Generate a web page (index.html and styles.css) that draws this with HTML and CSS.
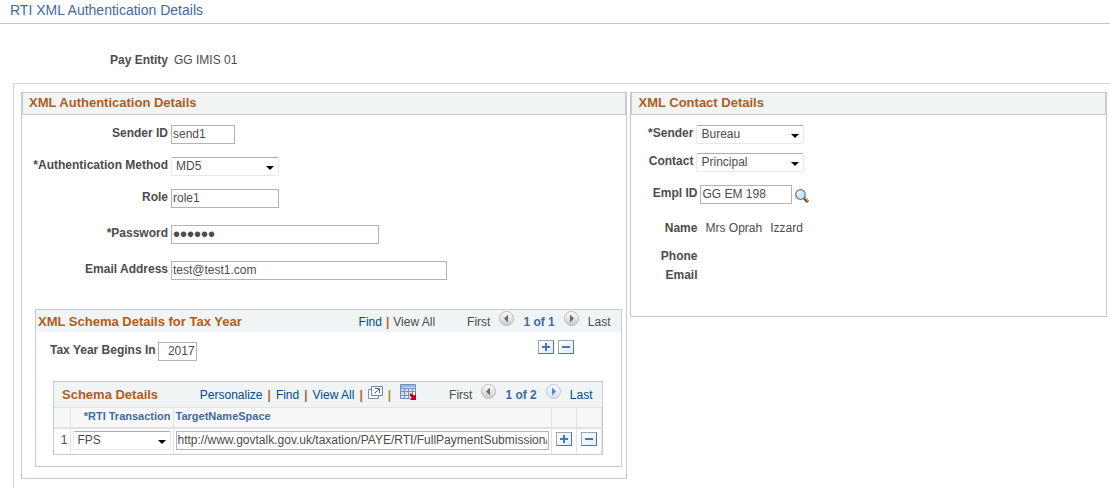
FILE: index.html
```
<!DOCTYPE html>
<html lang="en">
<head>
    <meta charset="UTF-8">
    <meta name="viewport" content="width=device-width, initial-scale=1.0">
    <title>RTI XML Authentication Details</title>
    <link rel="stylesheet" href="styles.css">
</head>
<body>
    <!-- Shared icons -->
    <svg class="sprite" aria-hidden="true">
        <defs>
            <linearGradient id="silver" x1="0" y1="0" x2="0" y2="1">
                <stop offset="0" stop-color="#ffffff"/>
                <stop offset="1" stop-color="#c9cacb"/>
            </linearGradient>
            <linearGradient id="blue" x1="0" y1="0" x2="0" y2="1">
                <stop offset="0" stop-color="#ffffff"/>
                <stop offset="1" stop-color="#d3e0f6"/>
            </linearGradient>
            <linearGradient id="sheet" x1="0" y1="0" x2="1" y2="1">
                <stop offset="0" stop-color="#a3c4ff"/>
                <stop offset="1" stop-color="#ffffff"/>
            </linearGradient>
        </defs>
        <symbol id="prev" viewBox="0 0 15 15">
            <circle cx="7.5" cy="7.5" r="7" fill="url(#silver)" stroke="#b9bbbd"/>
            <path d="M9 3.5v8L5 7.5z" fill="#6a6c6f"/>
        </symbol>
        <symbol id="next" viewBox="0 0 15 15">
            <circle cx="7.5" cy="7.5" r="7" fill="url(#silver)" stroke="#b9bbbd"/>
            <path d="M6 3.5v8l4-4z" fill="#6a6c6f"/>
        </symbol>
        <symbol id="next-on" viewBox="0 0 15 15">
            <circle cx="7.5" cy="7.5" r="7" fill="url(#blue)" stroke="#b4c6ea"/>
            <path d="M6 3.5v8l4-4z" fill="#4f86cf"/>
        </symbol>
        <symbol id="plus" viewBox="0 0 16 14">
            <path d="M4 7h8M8 3v8" fill="none" stroke="#3c78c3" stroke-width="2"/>
        </symbol>
        <symbol id="minus" viewBox="0 0 16 14">
            <path d="M4 7h8" fill="none" stroke="#3c78c3" stroke-width="2"/>
        </symbol>
    </svg>

    <h1 class="page-title">RTI XML Authentication Details</h1>

    <div class="pay-entity">
        <span class="label">Pay Entity</span>
        <span>GG IMIS 01</span>
    </div>

    <main class="frame">
        <section class="panel">
            <h2 class="panel-title">XML Authentication Details</h2>

            <div class="fields auth-fields">
                <div class="field">
                    <label class="label" for="sender-id">Sender ID</label>
                    <input class="text w-small" id="sender-id" type="text" value="send1">
                </div>
                <div class="field">
                    <label class="label" for="auth-method">*Authentication Method</label>
                    <span class="select w-medium"><select id="auth-method"><option>MD5</option></select></span>
                </div>
                <div class="field roomy">
                    <label class="label" for="role">Role</label>
                    <input class="text w-medium" id="role" type="text" value="role1">
                </div>
                <div class="field roomy">
                    <label class="label" for="password">*Password</label>
                    <input class="text password w-large" id="password" type="password" value="secret">
                </div>
                <div class="field">
                    <label class="label" for="email-address">Email Address</label>
                    <input class="text w-xlarge" id="email-address" type="text" value="test@test1.com">
                </div>
            </div>

            <section class="year">
                <header class="bar">
                    <h2 class="bar-title">XML Schema Details for Tax Year</h2>
                    <nav class="tools">
                        <a href="#">Find</a><span class="sep">|</span><span>View All</span>
                    </nav>
                    <div class="pager">
                        <span>First</span>
                        <svg class="arrow" aria-hidden="true"><use href="#prev"/></svg>
                        <span class="count">1 of 1</span>
                        <svg class="arrow" aria-hidden="true"><use href="#next"/></svg>
                        <span>Last</span>
                    </div>
                </header>

                <div class="year-row">
                    <label class="label" for="tax-year">Tax Year Begins In</label>
                    <input class="text w-year" id="tax-year" type="text" value="2017">
                    <div class="row-buttons">
                        <button class="square" type="button" aria-label="Add a new row"><svg aria-hidden="true"><use href="#plus"/></svg></button>
                        <button class="square" type="button" aria-label="Delete row"><svg aria-hidden="true"><use href="#minus"/></svg></button>
                    </div>
                </div>

                <div class="grid">
                    <header class="bar grid-bar">
                        <h3 class="bar-title">Schema Details</h3>
                        <nav class="tools">
                            <a href="#">Personalize</a><span class="sep">|</span><a href="#">Find</a><span class="sep">|</span><a href="#">View All</a><span class="sep">|</span>
                            <a class="tool" href="#" aria-label="Zoom">
                                <svg width="15" height="13" viewBox="0 0 15 13" aria-hidden="true">
                                    <path d="M3.500 3.500h-3v9h10v-3" fill="#fff" stroke="#7d8fa3"/>
                                    <path d="M3.500.5h11v9h-11z" fill="#fff" stroke="#6f859c"/>
                                    <path d="M6.500 7.500l4.500-4.500M7 2.500h4.500v4.500" fill="none" stroke="#4a6787"/>
                                </svg>
                            </a><span class="sep gold">|</span>
                            <a class="tool download" href="#" aria-label="Download">
                                <svg width="17" height="17" viewBox="0 0 17 17" aria-hidden="true">
                                    <path d="M.5.5h15v14H.5z" fill="url(#sheet)" stroke="#6e8fc8"/>
                                    <path d="M1 1h14v2H1z" fill="#8fb4f2"/>
                                    <path d="M1 4.500h14M1 7.500h14M1 11.500h14M4.500 4v10M8.500 4v10M12.500 4v10" fill="none" stroke="#8491ad"/>
                                    <path d="M10 10l1-1 3 3 2-2v6h-6l2-2-2-2z" fill="#c4000c"/>
                                </svg>
                            </a>
                        </nav>
                        <div class="pager">
                            <span>First</span>
                            <svg class="arrow" aria-hidden="true"><use href="#prev"/></svg>
                            <span class="count">1 of 2</span>
                            <a class="arrow" href="#" aria-label="Next"><svg class="arrow" aria-hidden="true"><use href="#next-on"/></svg></a>
                            <a href="#">Last</a>
                        </div>
                    </header>
                    <table class="schemas">
                        <thead>
                            <tr>
                                <th class="col-num"></th>
                                <th class="col-rti" id="rti">*RTI Transaction</th>
                                <th id="target">TargetNameSpace</th>
                                <th class="col-button"></th>
                                <th class="col-button"></th>
                            </tr>
                        </thead>
                        <tbody>
                            <tr>
                                <td class="num">1</td>
                                <td><span class="select"><select aria-labelledby="rti"><option>FPS</option></select></span></td>
                                <td><input class="text" type="text" aria-labelledby="target" value="http://www.govtalk.gov.uk/taxation/PAYE/RTI/FullPaymentSubmission/16-17/1"></td>
                                <td class="center"><button class="square" type="button" aria-label="Add row"><svg aria-hidden="true"><use href="#plus"/></svg></button></td>
                                <td class="center"><button class="square" type="button" aria-label="Delete row"><svg aria-hidden="true"><use href="#minus"/></svg></button></td>
                            </tr>
                        </tbody>
                    </table>
                </div>
            </section>
        </section>

        <section class="panel">
            <h2 class="panel-title">XML Contact Details</h2>

            <div class="fields contact-selects">
                <div class="field">
                    <label class="label" for="sender">*Sender</label>
                    <span class="select w-medium"><select id="sender"><option>Bureau</option></select></span>
                </div>
                <div class="field">
                    <label class="label" for="contact">Contact</label>
                    <span class="select w-medium"><select id="contact"><option>Principal</option></select></span>
                </div>
            </div>

            <div class="fields contact-fields">
                <div class="field">
                    <label class="label" for="empl-id">Empl ID</label>
                    <input class="text w-empl" id="empl-id" type="text" value="GG EM 198">
                    <button class="lookup" type="button" aria-label="Look up Empl ID">
                        <svg width="14" height="14" viewBox="0 0 14 14" aria-hidden="true">
                            <path d="M9 9l4 4" stroke="#5b4424" stroke-width="3"/>
                            <path d="M9.500 8.500l4 4" stroke="#c99a4a" stroke-width="1.500"/>
                            <circle cx="5.500" cy="5.500" r="4.800" fill="#c5ebf9" stroke="#6d7389" stroke-width="1.200"/>
                            <path d="M3 5.500a2.500 2.500 0 0 1 2.500-2.500" fill="none" stroke="#fff" stroke-width="1.500"/>
                        </svg>
                    </button>
                </div>
            </div>

            <div class="fields contact-info">
                <div class="field name">
                    <span class="label">Name</span>
                    <span class="value">Mrs Oprah</span>
                    <span class="value">Izzard</span>
                </div>
                <div class="field"><span class="label">Phone</span></div>
                <div class="field"><span class="label">Email</span></div>
            </div>
        </section>
    </main>
</body>
</html>
```

FILE: styles.css
```
* {
    box-sizing: border-box;
}

body {
    margin: 0;
    min-height: 100vh;
    display: flex;
    flex-direction: column;
    font-family: "Liberation Sans", Arial, sans-serif;
    font-size: 12px;
    line-height: 16px;
    color: #4c4c4c;
    background: #fff;
}

h1, h2, h3 {
    margin: 0;
}

a {
    color: #004b91;
    text-decoration: none;
}

input, select, button {
    font: inherit;
    color: inherit;
    margin: 0;
}

.sprite {
    position: absolute;
    width: 0;
    height: 0;
}

.page-title {
    height: 24px;
    padding: 2px 10px 0;
    border-bottom: 1px solid #c6c6c6;
    font-size: 14px;
    font-weight: normal;
    color: #426a9f;
}

.pay-entity {
    display: flex;
    gap: 6px;
    padding: 28px 0 15px 110px;
}

.label {
    font-weight: bold;
    white-space: nowrap;
}

/* Outer frame, open to the right and the bottom */
.frame {
    flex: 1;
    display: grid;
    grid-template-columns: 14fr 11fr;
    align-items: start;
    gap: 3px;
    margin-left: 13px;
    padding: 8px 3px 8px 7px;
    border-top: 1px solid #dcd8c9;
    border-left: 1px solid #dcd5cc;
}

.panel {
    min-width: 0;
    border: 1px solid #c5cad3;
}

.panel-title {
    height: 22px;
    padding: 2px 6px;
    border-bottom: 1px solid #c5cad3;
    border-left: 1px solid #c5cad3;
    border-right: 1px solid #c5cad3;
    background: #f0f4f5;
    font-size: 13px;
    color: #b05c1d;
}

/* Form rows */
.fields {
    display: flex;
    flex-direction: column;
}

.field {
    display: flex;
    align-items: flex-start;
    gap: 3px;
}

.field > .label {
    text-align: right;
}

.auth-fields {
    gap: 13px;
    padding: 10px 0 29px;
}

.auth-fields .label {
    width: 146px;
}

.auth-fields .roomy {
    margin-bottom: 4px;
}

.text {
    width: 100%;
    height: 19px;
    padding: 0 1px 1px;
    border: 1px solid #b3b3b3;
    background: #fff;
}

.password {
    font-size: 20px;
}

.select {
    position: relative;
    display: block;
}

.select select {
    display: block;
    width: 100%;
    height: 19px;
    padding: 0 16px 1px 4px;
    border: 1px solid #e3e9ef;
    border-top-color: #abadb3;
    border-radius: 2px;
    background: #fff;
    appearance: none;
}

.select::after {
    content: "";
    position: absolute;
    right: 5px;
    top: 9px;
    border: 4px solid transparent;
    border-top-color: #000;
    border-bottom: 0;
    pointer-events: none;
}

.w-small { width: 64px; }
.w-medium { width: 108px; }
.w-large { width: 208px; }
.w-xlarge { width: 276px; }
.w-year { width: 39px; text-align: right; }
.w-empl { width: 92px; }

/* Tax year box */
.year {
    margin: 0 4px 11px 13px;
    border: 1px solid #c5cad3;
}

.bar {
    display: flex;
    align-items: flex-start;
    height: 22px;
    padding: 4px 11px 0 2px;
    background: #f0f4f5;
    white-space: nowrap;
}

.bar-title {
    font-size: 13px;
    color: #b05c1d;
}

.tools {
    display: flex;
    gap: 4px;
    margin-left: auto;
}

.sep {
    font-weight: bold;
    color: #b9602f;
}

.gold {
    color: #b58a2c;
}

.pager {
    display: flex;
    margin-left: 32px;
}

.arrow {
    display: block;
    width: 15px;
    height: 15px;
}

.pager > .arrow {
    margin: -3px 9px 0;
}

.count {
    font-weight: bold;
    color: #426a9f;
}

.year-row {
    display: flex;
    align-items: flex-start;
    gap: 2px;
    padding: 10px 47px 20px 14px;
}

.row-buttons {
    display: flex;
    gap: 4px;
    margin: -2px 0 0 auto;
}

.square {
    display: block;
    width: 16px;
    height: 14px;
    padding: 0;
    border: 1px solid #90aabb;
    border-right-color: #5b7184;
    border-bottom-color: #5b7184;
    background: linear-gradient(135deg, #fff, #e3eaf0);
}

.square svg {
    display: block;
    width: 16px;
    height: 14px;
    margin: -1px;
}

/* Schema details grid */
.grid {
    margin: 0 18px 11px 17px;
    border: 1px solid #c5cad3;
}

.grid-bar {
    height: 25px;
    padding: 5px 10px 0 8px;
}

.grid-bar .tools {
    gap: 5px;
}

.tool {
    margin-top: -1px;
}

.tool svg {
    display: block;
}

.download {
    margin: -3px 0 0 4px;
}

.schemas {
    width: 100%;
    table-layout: fixed;
    border-collapse: collapse;
}

.schemas th, .schemas td {
    border: 1px solid #e2e2e2;
    padding: 0 2px;
}

.schemas th:first-child, .schemas td:first-child {
    border-left: 0;
}

.schemas tbody td {
    height: 26px;
    border-bottom: 0;
    padding-bottom: 2px;
}

.schemas th {
    height: 20px;
    padding-bottom: 2px;
    border-bottom-width: 2px;
    background: #f8f8f8;
    font-size: 11px;
    text-align: left;
    color: #426a9f;
    white-space: nowrap;
}

.schemas .col-num { width: 16px; }
.schemas .col-rti { width: 103px; text-align: right; }
.schemas .col-button { width: 25px; }

.schemas .num {
    text-align: right;
}

.schemas tbody .center {
    padding-bottom: 5px;
}

.center .square {
    margin: 0 auto;
}

/* Contact details */
.contact-selects {
    gap: 9px;
    padding-top: 10px;
}

.contact-selects .label {
    width: 62px;
}

.contact-fields {
    padding-top: 13px;
}

.contact-fields .label, .contact-info .label {
    width: 66px;
}

.contact-info {
    gap: 3px;
    padding: 16px 0 33px;
}

.contact-info .field {
    gap: 8px;
}

.contact-info .name {
    margin-bottom: 9px;
}

.lookup {
    margin-top: 4px;
    padding: 0;
    border: 0;
    background: none;
}

.lookup svg {
    display: block;
}
```
